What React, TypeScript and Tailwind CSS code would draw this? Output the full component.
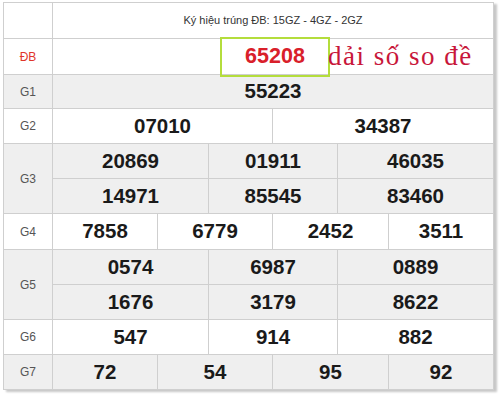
import React from "react";

const num = "text-center font-bold text-[20.5px] text-[#1a1a1a] border border-[#cfcfcf]";
const lab = "text-center text-[12px] text-[#555] border border-[#cfcfcf]";

export default function App() {
  return (
    <div className="w-[500px] h-[397px] bg-white pl-[3px] pt-[2px]" style={{ fontFamily: '"Liberation Sans", Arial, sans-serif' }}>
      <div className="relative w-[490px]">
        <table className="w-[490px] table-fixed border-collapse shadow-[3px_2px_2px_rgba(0,0,0,0.22)]">
          <colgroup>
            <col className="w-[49px]" />
            <col className="w-[105px]" />
            <col className="w-[51px]" />
            <col className="w-[64px]" />
            <col className="w-[65px]" />
            <col className="w-[51px]" />
            <col className="w-[105px]" />
          </colgroup>
          <tbody>
            <tr className="h-[36px] bg-white">
              <td className="border border-[#cfcfcf]"></td>
              <td colSpan={6} className="text-center text-[11px] text-[#333] border border-[#cfcfcf]">
                Ký hiệu trúng ĐB: 15GZ - 4GZ - 2GZ
              </td>
            </tr>
            <tr className="h-[36px] bg-white">
              <td className="text-center text-[12px] text-[#e0352b] border border-[#cfcfcf]">ĐB</td>
              <td colSpan={6} className="border border-[#cfcfcf]"></td>
            </tr>
            <tr className="h-[34px] bg-[#efefef]">
              <td className={lab}>G1</td>
              <td colSpan={6} className={num}>55223</td>
            </tr>
            <tr className="h-[35px] bg-white">
              <td className={lab}>G2</td>
              <td colSpan={3} className={num}>07010</td>
              <td colSpan={3} className={num}>34387</td>
            </tr>
            <tr className="h-[35px] bg-[#efefef]">
              <td rowSpan={2} className={lab}>G3</td>
              <td colSpan={2} className={num}>20869</td>
              <td colSpan={2} className={num}>01911</td>
              <td colSpan={2} className={num}>46035</td>
            </tr>
            <tr className="h-[35px] bg-[#efefef]">
              <td colSpan={2} className={num}>14971</td>
              <td colSpan={2} className={num}>85545</td>
              <td colSpan={2} className={num}>83460</td>
            </tr>
            <tr className="h-[36px] bg-white">
              <td className={lab}>G4</td>
              <td className={num}>7858</td>
              <td colSpan={2} className={num}>6779</td>
              <td colSpan={2} className={num}>2452</td>
              <td className={num}>3511</td>
            </tr>
            <tr className="h-[35px] bg-[#efefef]">
              <td rowSpan={2} className={lab}>G5</td>
              <td colSpan={2} className={num}>0574</td>
              <td colSpan={2} className={num}>6987</td>
              <td colSpan={2} className={num}>0889</td>
            </tr>
            <tr className="h-[35px] bg-[#efefef]">
              <td colSpan={2} className={num}>1676</td>
              <td colSpan={2} className={num}>3179</td>
              <td colSpan={2} className={num}>8622</td>
            </tr>
            <tr className="h-[35px] bg-white">
              <td className={lab}>G6</td>
              <td colSpan={2} className={num}>547</td>
              <td colSpan={2} className={num}>914</td>
              <td colSpan={2} className={num}>882</td>
            </tr>
            <tr className="h-[35px] bg-[#efefef]">
              <td className={lab}>G7</td>
              <td className={num}>72</td>
              <td colSpan={2} className={num}>54</td>
              <td colSpan={2} className={num}>95</td>
              <td className={num}>92</td>
            </tr>
          </tbody>
        </table>
        <div className="absolute left-[217px] top-[35px] w-[110px] h-[40px] border-2 border-[#b4dd3c] flex items-center justify-center">
          <span className="font-bold text-[21.5px] text-[#d9202a] leading-none">65208</span>
        </div>
        <div
          className="absolute left-[325px] top-[41px] text-[27px] leading-none text-[#c8163a] tracking-[1.5px] whitespace-nowrap"
          style={{ fontFamily: '"Liberation Serif", "Times New Roman", serif' }}
        >
          dải số so đề
        </div>
      </div>
    </div>
  );
}
